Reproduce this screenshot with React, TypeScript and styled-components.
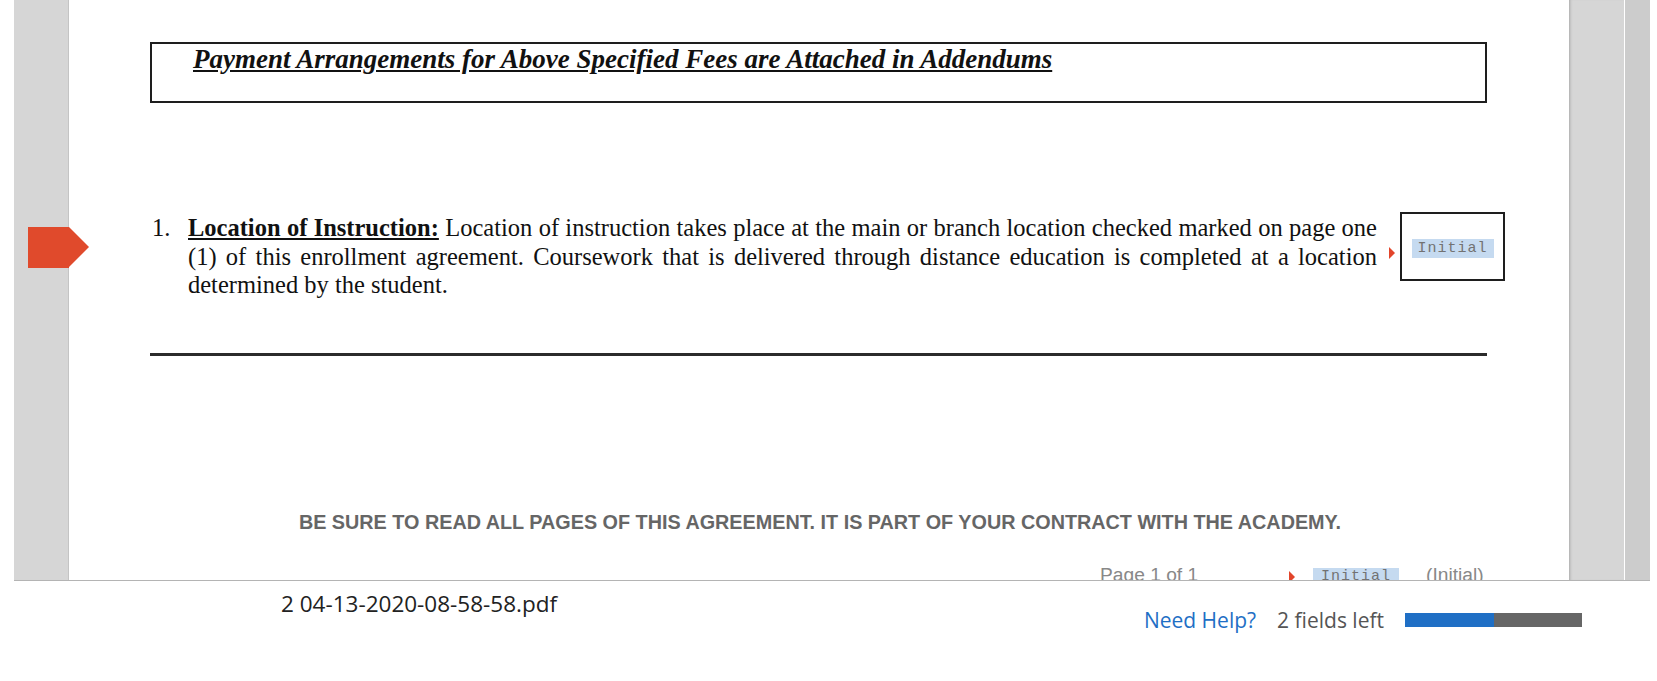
import React from "react";
import styled, { createGlobalStyle } from "styled-components";

const Global = createGlobalStyle`
  html, body { margin: 0; padding: 0; background: #ffffff; }
  body { font-family: "Open Sans", "Liberation Sans", sans-serif; }
`;

const Shell = styled.div`
  width: 1657px;
  height: 681px;
  overflow: hidden;
  background: #fff;
`;

const Viewer = styled.div`
  position: relative;
  margin-left: 14px;
  width: 1636px;
  height: 580px;
  border-bottom: 1px solid #b4b4b4;
  display: flex;
  overflow: hidden;
`;

const Gutter = styled.div<{ $w: number; $bg: string; $shadow?: boolean }>`
  flex: 0 0 ${(p) => p.$w}px;
  background: ${(p) => p.$bg};
  ${(p) => (p.$shadow ? "box-shadow: inset 3px 0 3px -2px #a8a8a8;" : "")}
`;

const LeftGutter = styled(Gutter)`
  border-right: 1px solid #c4c4c4;
`;

const Divider = styled.div`
  flex: 0 0 1px;
  background: #fff;
`;

const Page = styled.div`
  flex: 0 0 1500px;
  background: #fff;
  padding: 42px 0 0 81px;
  box-sizing: border-box;
  color: #111;
  font-family: "Liberation Serif", "Times New Roman", serif;
`;

const HeaderBox = styled.div`
  width: 1337px;
  height: 61px;
  box-sizing: border-box;
  border: 2px solid #1e1e1e;
  padding: 0 0 0 41px;
`;

const HeaderTitle = styled.span`
  font-weight: bold;
  font-style: italic;
  text-decoration: underline;
  text-underline-offset: 2px;
  font-size: 27px;
  line-height: 30px;
`;

const Item = styled.div`
  display: flex;
  align-items: flex-start;
  margin-top: 111px;
`;

const Num = styled.div`
  flex: 0 0 38px;
  font-size: 24.5px;
  line-height: 28.5px;
  padding-left: 2px;
  box-sizing: border-box;
`;

const Para = styled.div`
  flex: 0 0 1189px;
  font-size: 24.5px;
  line-height: 28.5px;
`;

const Line = styled.span<{ $justify?: boolean }>`
  display: block;
  text-align: ${(p) => (p.$justify ? "justify" : "left")};
  text-align-last: ${(p) => (p.$justify ? "justify" : "left")};
  white-space: nowrap;
`;

const Strong = styled.span`
  font-weight: bold;
  text-decoration: underline;
  text-underline-offset: 2px;
`;

const FieldGroup = styled.div`
  display: flex;
  align-items: center;
  margin-left: 12px;
  margin-top: -2px;
`;

const Tick = styled.span<{ $gap?: number; $drop?: number }>`
  width: 0;
  height: 0;
  border-top: 6px solid transparent;
  border-bottom: 6px solid transparent;
  border-left: 6px solid #e2452b;
  margin-right: ${(p) => p.$gap ?? 5}px;
  margin-top: ${(p) => p.$drop ?? 0}px;
`;

const InitialBox = styled.div`
  width: 105px;
  height: 69px;
  box-sizing: border-box;
  border: 2px solid #1e1e1e;
  display: flex;
  align-items: center;
  justify-content: center;
  padding-top: 4px;
`;

const InitialField = styled.span<{ $w?: number }>`
  display: inline-flex;
  align-items: center;
  justify-content: center;
  width: ${(p) => p.$w ?? 82}px;
  height: 19px;
  background: #c5daf0;
  color: #727272;
  font-family: "Liberation Mono", "Courier New", monospace;
  font-size: 15px;
  letter-spacing: 1px;
`;

const Rule = styled.div`
  width: 1337px;
  height: 3px;
  background: #2b2b2b;
  margin-top: 53px;
`;

const Notice = styled.div`
  width: 1340px;
  text-align: center;
  font-family: "Liberation Sans", Arial, sans-serif;
  font-weight: bold;
  font-size: 19.8px;
  color: #666;
  margin-top: 155px;
  line-height: 22px;
`;

const PageFooter = styled.div`
  display: flex;
  align-items: flex-start;
  margin-top: 31px;
  margin-left: 950px;
  font-family: "Liberation Sans", Arial, sans-serif;
  font-size: 19.2px;
  color: #888;
  line-height: 22px;
`;

const PageNum = styled.span`
  width: 189px;
`;

const FooterField = styled.div`
  display: flex;
  align-items: center;
  padding-top: 4px;
  margin-right: 27px;
`;

const NextArrow = styled.div`
  position: absolute;
  left: 14px;
  top: 227px;
  width: 41px;
  height: 41px;
  background: #e04a2c;
  &::after {
    content: "";
    position: absolute;
    left: 41px;
    top: 0;
    border-top: 20.5px solid transparent;
    border-bottom: 20.5px solid transparent;
    border-left: 20px solid #e04a2c;
  }
`;

const Footer = styled.div`
  display: flex;
  justify-content: space-between;
  align-items: flex-start;
  padding: 0 75px 0 281px;
`;

const FileName = styled.div`
  font-family: "Open Sans", sans-serif;
  font-size: 22.5px;
  color: #222;
  padding-top: 8px;
  line-height: 30px;
`;

const Status = styled.div`
  display: flex;
  align-items: center;
  padding-top: 25px;
  font-family: "Open Sans", sans-serif;
  font-size: 21px;
  line-height: 28px;
`;

const HelpLink = styled.a`
  color: #1f6fc5;
  text-decoration: none;
  margin-right: 21px;
`;

const Remaining = styled.span`
  color: #555;
  margin-right: 21px;
`;

const Progress = styled.div`
  width: 177px;
  height: 14px;
  background: #666;
  display: flex;
`;

const ProgressFill = styled.div`
  height: 100%;
  background: #1f6fc5;
`;

export default function App() {
  const done = 1;
  const total = 2;
  return (
    <Shell>
      <Global />
      <Viewer>
        <LeftGutter $w={54} $bg="#d6d6d6" />
        <Page>
          <HeaderBox>
            <HeaderTitle>
              Payment Arrangements for Above Specified Fees are Attached in Addendums
            </HeaderTitle>
          </HeaderBox>
          <Item>
            <Num>1.</Num>
            <Para>
              <Line $justify>
                <Strong>Location of Instruction:</Strong> Location of instruction takes place at the main or branch location checked marked on page one
              </Line>
              <Line $justify>
                (1) of this enrollment agreement. Coursework that is delivered through distance education is completed at a location
              </Line>
              <Line>determined by the student.</Line>
            </Para>
            <FieldGroup>
              <Tick $drop={12} />
              <InitialBox>
                <InitialField>Initial</InitialField>
              </InitialBox>
            </FieldGroup>
          </Item>
          <Rule />
          <Notice>
            BE SURE TO READ ALL PAGES OF THIS AGREEMENT. IT IS PART OF YOUR CONTRACT WITH THE ACADEMY.
          </Notice>
          <PageFooter>
            <PageNum>Page 1 of 1</PageNum>
            <FooterField>
              <Tick $gap={18} />
              <InitialField $w={86}>Initial</InitialField>
            </FooterField>
            <span>(Initial)</span>
          </PageFooter>
        </Page>
        <Gutter $w={55} $bg="#d6d6d6" $shadow />
        <Divider />
        <Gutter $w={25} $bg="#cccccc" />
        <NextArrow />
      </Viewer>
      <Footer>
        <FileName>2 04-13-2020-08-58-58.pdf</FileName>
        <Status>
          <HelpLink href="#">Need Help?</HelpLink>
          <Remaining>{total} fields left</Remaining>
          <Progress>
            <ProgressFill style={{ width: `${(done / total) * 100}%` }} />
          </Progress>
        </Status>
      </Footer>
    </Shell>
  );
}
